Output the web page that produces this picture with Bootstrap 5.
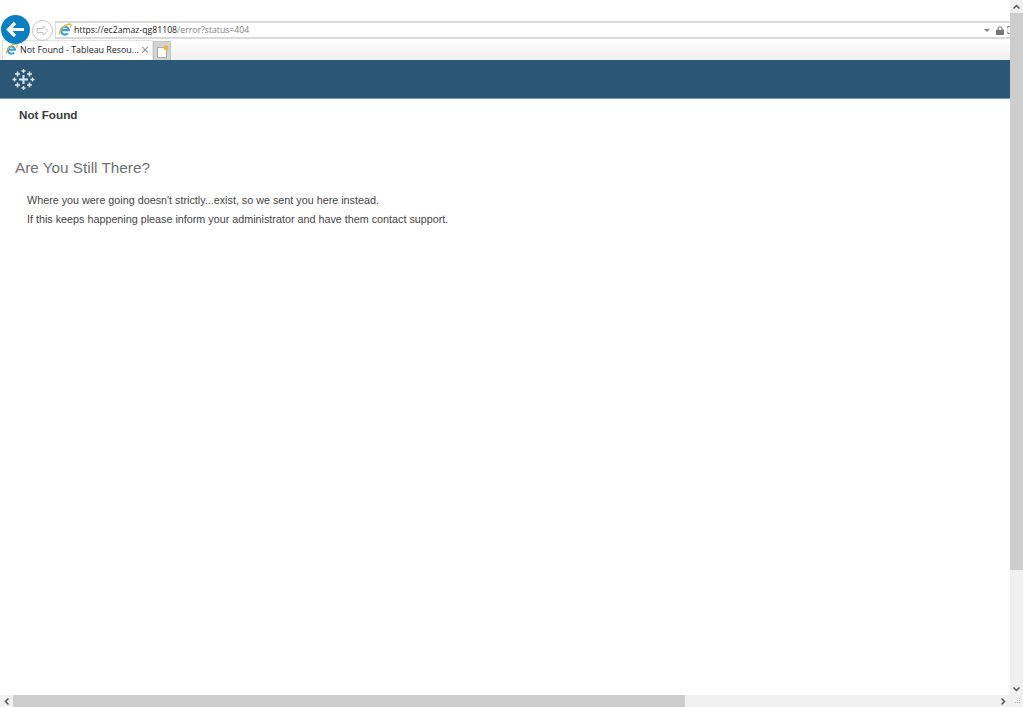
<!doctype html>
<html lang="en">
<head>
<meta charset="utf-8">
<title>Not Found - Tableau Resources</title>
<link href="https://cdn.jsdelivr.net/npm/bootstrap@5.3.0/dist/css/bootstrap.min.css" rel="stylesheet">
<style>
html,body{height:100%;overflow:hidden;background:#fff}
body{font-family:"Liberation Sans",Arial,sans-serif;color:#333}
.shell{height:707px;width:1023px}
.viewport{height:695px}
.pagecol{width:1010px}
.toolbar{height:40px;padding:21px 0 1px 55px;position:relative}
.backbtn{position:absolute;left:1px;top:15px;width:29px;height:29px;border-radius:50%;background:#0a7fc2;z-index:2}
.fwdbtn{position:absolute;left:32px;top:20px;width:21px;height:21px;border-radius:50%;border:1px solid #c4c4c4;background:#fff}
.addr{height:18px;border:1px solid #dadada;border-width:2px 0 2px 1px;font:8.7px/14px "Open Sans",sans-serif;color:#222;padding-left:2px;white-space:nowrap}
.addr-ie{margin-right:2px}
.addr-dim{color:#808080}
.addr-end{margin-left:auto;gap:3px}
.addr-caret{margin-right:3px}
.tabrow{height:20px;background:linear-gradient(#fff,#f0f0f0);padding-left:2px}
.tabitem{width:151px;height:20px;background:#fff;border:1px solid #e4e4e4;border-width:1px 1px 0;font:8.9px/18px "Open Sans",sans-serif;color:#222;padding-left:2px;white-space:nowrap}
.tab-ie{margin:2px 2px 0 0}
.tabx{color:#8a8a8a;font-size:14px;margin-left:auto;margin-right:3px;line-height:17px}
.newtab{width:18px;height:19px;margin-top:1px;background:#d2d2d2;border:1px solid #c4c4c4;border-bottom:0}
.banner{height:38.5px;background:#2a5775;border-bottom:1px solid #7d99ac;padding:2px 0 0 12px}
.subhead{font-size:11.7px;font-weight:700;line-height:15px;color:#3a3a3a;padding:8px 0 0 19px;margin:0}
.bigtitle{font-size:15.3px;font-weight:400;line-height:20px;color:#707070;margin:36px 0 0 15px}
.msgs{margin:13px 0 0 27px;font-size:10.78px;line-height:19px;color:#444}
.msgs p{margin:0}
.vbar{width:13px;background:#f0f0f0}
.vthumb{margin-top:13px;height:557px;background:#cdcdcd}
.hbar{height:12px;background:#f0f0f0}
.hthumb{margin-left:13px;width:672px;background:#cdcdcd}
.grip{margin-left:auto;width:13px}
.arrow-up{margin:4px 0 0 3px}
.arrow-down{margin:auto 0 3px 3px}
.arrow-left{left:4px;top:3px}
.arrow-right{left:1001px;top:3px}
</style>
</head>
<body>
<svg class="d-none"><defs>
  <symbol id="ie" viewBox="0 0 14 14">
    <path d="M3.300 7.200h7.500A3.900 3.900 0 1 0 9.800 10.300" fill="none" stroke="#3a9fe0" stroke-width="2.200"/>
    <path d="M1.200 11.500C1.300 7 7 1 12.300 1c1.300.5.900 2.400.1 3.700" fill="none" stroke="#e9b23a" stroke-width="1.300"/>
  </symbol>
</defs></svg>
<div class="shell d-flex flex-column">
  <div class="viewport d-flex">
    <div class="pagecol d-flex flex-column overflow-hidden">
      <div class="toolbar">
        <div class="backbtn d-flex align-items-center justify-content-center">
          <svg width="19" height="17" viewBox="0 0 19 17"><path d="M9 2 2.500 8.500 9 15M3 8.500h15" fill="none" stroke="#fff" stroke-width="3.200"/></svg>
        </div>
        <div class="fwdbtn d-flex align-items-center justify-content-center">
          <svg width="13" height="11" viewBox="0 0 13 11"><path d="M7 .8 12 5.500 7 10.200V7.500H1v-4h6z" fill="#fff" stroke="#c0c0c0"/></svg>
        </div>
        <div class="addr d-flex align-items-center">
          <svg class="addr-ie" width="14" height="14"><use href="#ie"/></svg>
          <span>https://ec2amaz-qg81108<span class="addr-dim">/error?status=404</span></span>
          <span class="addr-end d-flex align-items-center">
            <svg class="addr-caret" width="6" height="3" viewBox="0 0 6 3"><path d="M0 0h6L3 3z" fill="#888"/></svg>
            <svg width="8" height="9" viewBox="0 0 8 9"><path d="M2 4V2.700a2 2 0 0 1 4 0V4" fill="none" stroke="#777" stroke-width="1.100"/><rect y="3.800" width="8" height="5.200" fill="#777"/></svg>
            <svg width="3" height="8" viewBox="0 0 3 8"><path d="M3 .5A3.500 3.500 0 0 0 3 7.500" fill="none" stroke="#888" stroke-width="1.200"/></svg>
          </span>
        </div>
      </div>
      <div class="tabrow d-flex">
        <div class="tabitem d-flex align-items-start">
          <svg class="tab-ie" width="13" height="13"><use href="#ie"/></svg>
          <span>Not Found - Tableau Resou...</span>
          <span class="tabx">×</span>
        </div>
        <div class="newtab d-flex align-items-center justify-content-center">
          <svg width="13" height="13" viewBox="0 0 13 13"><path d="M1.500 2.500h7l2 2v8h-9z" fill="#fff" stroke="#9a9a9a" stroke-width=".8"/><circle cx="10" cy="3" r="2.400" fill="#f2b53a"/></svg>
        </div>
      </div>
      <div class="banner d-flex align-items-center">
        <svg width="23" height="23" viewBox="0 0 23 23" stroke="#dfe7ec" fill="none">
          <path d="M11.500 7v9M7 11.500h9" stroke-width="2"/>
          <path d="M11.500 1v4M9.500 3h4M11.500 18v4M9.500 20h4M2.500 9.500v4M.5 11.500h4M20.500 9.500v4M18.500 11.500h4" stroke-width="1.300"/>
          <path d="M5.500 3.500v5M3 6h5M17.500 3.500v5M15 6h5M5.500 14.500v5M3 17h5M17.500 14.500v5M15 17h5" stroke-width="1.500"/>
        </svg>
      </div>
      <main>
        <h2 class="subhead">Not Found</h2>
        <h1 class="bigtitle">Are You Still There?</h1>
        <div class="msgs">
          <p>Where you were going doesn't strictly...exist, so we sent you here instead.</p>
          <p>If this keeps happening please inform your administrator and have them contact support.</p>
        </div>
      </main>
    </div>
    <div class="vbar d-flex flex-column position-relative">
      <svg class="position-absolute top-0 start-0 arrow-up" width="7" height="5" viewBox="0 0 7 5"><path d="M.5 4.500 3.500 1.500l3 3" fill="none" stroke="#555" stroke-width="1.500"/></svg>
      <div class="vthumb"></div>
      <svg class="arrow-down" width="7" height="5" viewBox="0 0 7 5"><path d="M.5.5l3 3 3-3" fill="none" stroke="#555" stroke-width="1.500"/></svg>
    </div>
  </div>
  <div class="hbar d-flex position-relative">
    <svg class="position-absolute arrow-left" width="5" height="7" viewBox="0 0 5 7"><path d="M4.500.5l-3 3 3 3" fill="none" stroke="#555" stroke-width="1.500"/></svg>
    <div class="hthumb"></div>
    <svg class="position-absolute arrow-right" width="5" height="7" viewBox="0 0 5 7"><path d="M.5.5l3 3-3 3" fill="none" stroke="#555" stroke-width="1.500"/></svg>
    <svg class="grip" width="13" height="12" viewBox="0 0 13 12"><path d="M9 3h1v1H9zM7 5h1v1H7zM9 5h1v1H9zM5 7h1v1H5zM7 7h1v1H7zM9 7h1v1H9z" fill="#bbb"/></svg>
  </div>
</div>
<script src="https://cdn.jsdelivr.net/npm/bootstrap@5.3.0/dist/js/bootstrap.bundle.min.js"></script>
</body>
</html>
